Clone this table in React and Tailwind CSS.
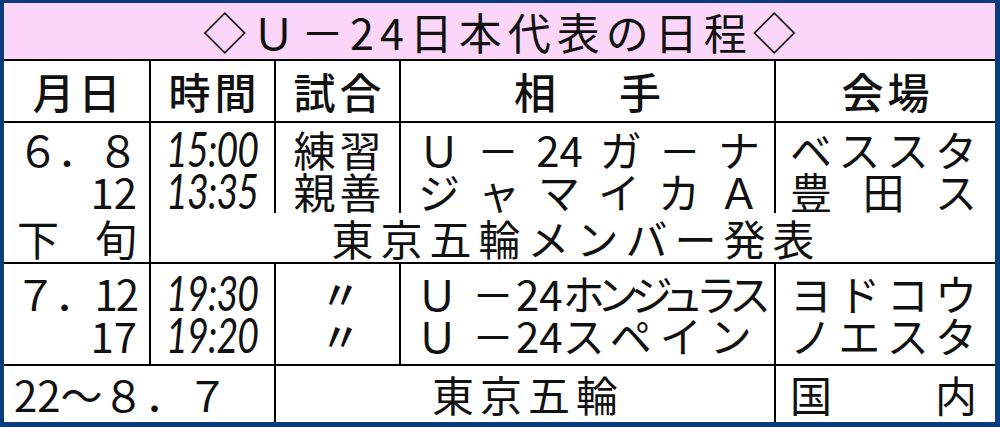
import React from 'react';

const jp = "font-['Noto_Sans_CJK_JP',sans-serif]";
const num = "font-['Lato','Noto_Sans',sans-serif] italic";

const Justify = ({ items, className = '' }) => (
  <div className={`flex justify-between ${className}`}>
    {items.map((t, i) => (
      <span key={i}>{t}</span>
    ))}
  </div>
);

const Time = ({ children }) => (
  <span className="inline-block scale-x-[0.78] tracking-[-1px] leading-[42px]">{children}</span>
);

const App = () => {
  return (
    <div className={`w-[1000px] h-[427px] bg-white text-[#111] ${jp} border-l-4 border-t-[3px] border-r-[5px] border-b-[5px] border-[#0b3d7e] overflow-hidden`}>
      <div className="h-[58px] bg-[#fcd6f8] border-b-2 border-black flex items-center justify-center">
        <span className="text-[43px] leading-none tracking-[6px] pl-[6px]">◇Ｕ－24日本代表の日程◇</span>
      </div>

      <div className="grid grid-cols-[147px_125px_125px_375px_1fr] grid-rows-[62px_90px_51px_102px_56px] text-[42px] leading-[42px]">
        {/* header */}
        <div className="border-r-2 border-b-2 border-black flex items-center justify-center font-medium tracking-[4px] pl-[4px]">月日</div>
        <div className="border-r-2 border-b-2 border-black flex items-center justify-center font-medium tracking-[4px] pl-[4px]">時間</div>
        <div className="border-r-2 border-b-2 border-black flex items-center justify-center font-medium tracking-[4px] pl-[4px]">試合</div>
        <div className="border-r-2 border-b-2 border-black flex items-center justify-center font-medium">
          <Justify items={['相', '手']} className="w-[147px]" />
        </div>
        <div className="border-b-2 border-black flex items-center justify-center font-medium tracking-[4px] pl-[4px]">会場</div>

        {/* row 1 top */}
        <div className="border-r-2 border-black flex flex-col justify-center items-end pr-[12px] pt-[4px]">
          <div className="tracking-[-2px]">６．８</div>
          <div>12</div>
        </div>
        <div className={`border-r-2 border-black flex flex-col justify-center items-center pt-[4px] text-[48px] ${num}`}>
          <Time>15:00</Time>
          <Time>13:35</Time>
        </div>
        <div className="border-r-2 border-black flex flex-col justify-center items-center pt-[4px] tracking-[4px] pl-[4px]">
          <div>練習</div>
          <div>親善</div>
        </div>
        <div className="border-r-2 border-black flex flex-col justify-center pl-[17px] pr-[14px] pt-[4px]">
          <Justify items={['Ｕ', '－', '24', 'ガ', '－', 'ナ']} />
          <Justify items={['ジ', 'ャ', 'マ', 'イ', 'カ', 'Ａ']} />
        </div>
        <div className="flex flex-col justify-center pl-[14px] pr-[18px] pt-[4px]">
          <Justify items={['ベ', 'ス', 'ス', 'タ']} />
          <Justify items={['豊', '田', 'ス']} />
        </div>

        {/* row 1 bottom */}
        <div className="border-r-2 border-b-2 border-black flex items-start justify-end pr-[12px] pt-[4px]">
          <Justify items={['下', '旬']} className="w-[120px]" />
        </div>
        <div className="col-span-4 border-b-2 border-black flex items-start justify-center pt-[4px] tracking-[7px] pl-[7px]">
          東京五輪メンバー発表
        </div>

        {/* row 2 */}
        <div className="border-r-2 border-b-2 border-black flex flex-col justify-center items-end pr-[12px]">
          <div className="tracking-[-2px]">７．12</div>
          <div>17</div>
        </div>
        <div className={`border-r-2 border-b-2 border-black flex flex-col justify-center items-center text-[48px] ${num}`}>
          <Time>19:30</Time>
          <Time>19:20</Time>
        </div>
        <div className="border-r-2 border-b-2 border-black flex flex-col justify-center items-center text-[40px] font-medium pl-[6px]">
          <div>〃</div>
          <div>〃</div>
        </div>
        <div className="border-r-2 border-b-2 border-black flex flex-col justify-center pl-[15px] whitespace-nowrap">
          <div className="flex items-center">
            <span className="shrink-0">Ｕ</span>
            <span className="shrink-0 ml-[14px]">－</span>
            <span className="shrink-0 ml-[2px]">24</span>
            <span className="shrink-0 tracking-[-8px]">ホンジュラス</span>
          </div>
          <div className="flex items-center">
            <span className="shrink-0">Ｕ</span>
            <span className="shrink-0 ml-[14px]">－</span>
            <span className="shrink-0 ml-[2px]">24</span>
            <span className="shrink-0 tracking-[8px]">スペイン</span>
          </div>
        </div>
        <div className="border-b-2 border-black flex flex-col justify-center pl-[14px] pr-[18px]">
          <Justify items={['ヨ', 'ド', 'コ', 'ウ']} />
          <Justify items={['ノ', 'エ', 'ス', 'タ']} />
        </div>

        {/* row 3 */}
        <div className="col-span-2 border-r-2 border-black flex items-center pl-[10px]">
          22～８．７
        </div>
        <div className="col-span-2 border-r-2 border-black flex items-center justify-center tracking-[6px] pl-[6px]">
          東京五輪
        </div>
        <div className="flex items-center pl-[14px] pr-[18px]">
          <Justify items={['国', '内']} className="w-full" />
        </div>
      </div>
    </div>
  );
};

export default App;
